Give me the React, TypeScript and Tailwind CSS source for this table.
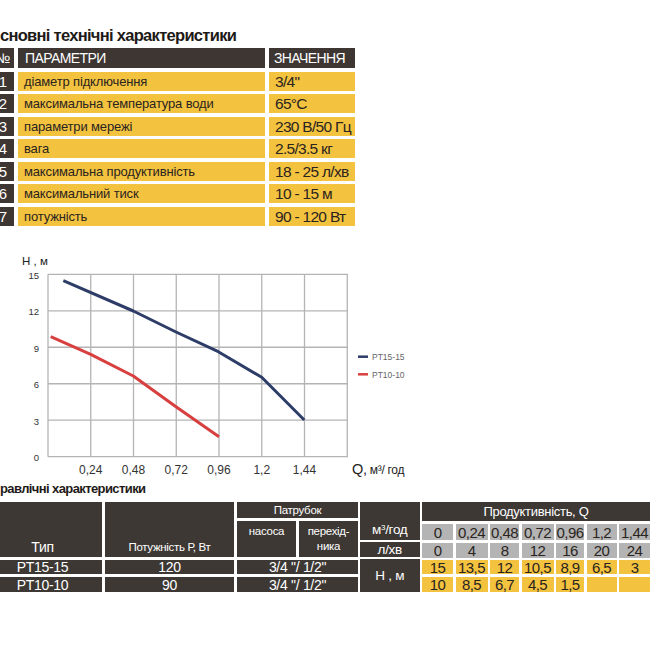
import React from "react";

const font = "font-['Liberation_Sans',Arial,sans-serif]";

const specs = [
  ["1", "діаметр підключення", "3/4\""],
  ["2", "максимальна температура води", "65°C"],
  ["3", "параметри мережі", "230 В/50 Гц"],
  ["4", "вага", "2.5/3.5 кг"],
  ["5", "максимальна продуктивність", "18 - 25 л/хв"],
  ["6", "максимальний тиск", "10 - 15 м"],
  ["7", "потужність", "90 - 120 Вт"],
];

const flowM3 = ["0", "0,24", "0,48", "0,72", "0,96", "1,2", "1,44"];
const flowL = ["0", "4", "8", "12", "16", "20", "24"];
const head15 = ["15", "13,5", "12", "10,5", "8,9", "6,5", "3"];
const head10 = ["10", "8,5", "6,7", "4,5", "1,5", "", ""];

// chart helpers: q in m3/h, h in m
const gx = (q: number) => 48 + (q / 0.24) * 42.75;
const gy = (h: number) => 216.7 - h * 12.16;

const blue = [
  [63.3, 40.7],
  [133.3, 71],
  [176, 92],
  [218.3, 111.7],
  [261.7, 137.3],
  [304.3, 180],
];
const red = [
  [50.7, 96.7],
  [90.7, 114.3],
  [133.3, 136],
  [176, 166.7],
  [219, 196.7],
];

const pts = (p: number[][]) => p.map((x) => x.join(",")).join(" ");
const svgFont = "Liberation Sans, Arial, sans-serif";

const SpecTable: React.FC = () => (
  <div className="ml-[-8px] grid grid-cols-[22px_247px_86px] gap-x-[4px] gap-y-[3.5px] whitespace-nowrap">
    <div className="h-[20px] bg-[#3d3633] text-white text-[14px] leading-[20px] text-center">№</div>
    <div className="h-[20px] bg-[#3d3633] text-white text-[14px] tracking-[-0.6px] leading-[20px] pl-[7px]">ПАРАМЕТРИ</div>
    <div className="h-[20px] bg-[#3d3633] text-white text-[14px] tracking-[-0.6px] leading-[20px] pl-[5px]">ЗНАЧЕННЯ</div>
    {specs.map(([n, p, v]) => (
      <React.Fragment key={n}>
        <div className="h-[19px] bg-[#3d3633] text-white text-[15px] leading-[19px] text-center">{n}</div>
        <div className="h-[19px] bg-[#f3c23f] text-[#2a2420] text-[13px] tracking-[-0.15px] leading-[19px] pl-[6px]">{p}</div>
        <div className="h-[19px] bg-[#f3c23f] text-[#2a2420] text-[15.5px] tracking-[-0.7px] leading-[19px] pl-[6px]">{v}</div>
      </React.Fragment>
    ))}
  </div>
);

const Chart: React.FC = () => (
  <svg width="420" height="240" className="block">
    {[0, 3, 6, 9, 12, 15].map((h) => (
      <g key={h}>
        <line x1={48} x2={348} y1={gy(h)} y2={gy(h)} stroke="#b4b4b4" strokeWidth="1.3" />
        <text x={39} y={gy(h) + 4.5} textAnchor="end" fontSize="9.5" fill="#333" fontFamily={svgFont}>
          {h}
        </text>
      </g>
    ))}
    {[0, 0.24, 0.48, 0.72, 0.96, 1.2, 1.44, 1.68].map((q) => (
      <line key={q} x1={gx(q)} x2={gx(q)} y1={gy(15)} y2={gy(0)} stroke="#b4b4b4" strokeWidth="1.3" />
    ))}
    {["0,24", "0,48", "0,72", "0,96", "1,2", "1,44"].map((t, i) => (
      <text key={t} x={gx(0.24 * (i + 1))} y={233.5} textAnchor="middle" fontSize="12" fill="#333" fontFamily={svgFont}>
        {t}
      </text>
    ))}
    <text x={22} y={25} fontSize="11.5" fill="#222" fontFamily={svgFont}>
      H , м
    </text>
    <text x={352} y={234} fill="#222" fontFamily={svgFont} letterSpacing="-0.3">
      <tspan fontSize="14.5">Q,</tspan>
      <tspan fontSize="12"> м³/ год</tspan>
    </text>
    <polyline points={pts(blue)} fill="none" stroke="#2e3d68" strokeWidth="3" strokeLinejoin="round" />
    <polyline points={pts(red)} fill="none" stroke="#d8403f" strokeWidth="3" strokeLinejoin="round" />
    <line x1={358} x2={368} y1={116.7} y2={116.7} stroke="#2e3d68" strokeWidth="2.5" />
    <line x1={358} x2={368} y1={134.3} y2={134.3} stroke="#d8403f" strokeWidth="2.5" />
    <text x={372} y={120} fontSize="8.5" fill="#666" fontFamily={svgFont}>PT15-15</text>
    <text x={372} y={137.6} fontSize="8.5" fill="#666" fontFamily={svgFont}>PT10-10</text>
  </svg>
);

const dark = "bg-[#3d3834] text-white";

const HydroTable: React.FC = () => (
  <div className="flex items-start tracking-[-0.3px]">
    <div className="ml-[-17px] grid grid-cols-[119px_129px_59px_59px] grid-rows-[16px_36px_14px_15px] gap-x-[3px] gap-y-[3px]">
      <div className={`${dark} row-span-2 flex items-end justify-center pb-[2px] text-[14px] leading-[16px]`}>Тип</div>
      <div className={`${dark} row-span-2 flex items-end justify-center pb-[2px] text-[11.5px] leading-[16px]`}>Потужність Р, Вт</div>
      <div className={`${dark} col-span-2 flex items-center justify-center text-[11.5px] leading-[16px]`}>Патрубок</div>
      <div className={`${dark} flex items-start justify-center pt-[3px] text-[11.5px] leading-[15px]`}>насоса</div>
      <div className={`${dark} flex items-start justify-center pt-[3px] text-center text-[11.5px] leading-[15px]`}>
        перехід-
        <br />
        ника
      </div>
      <div className={`${dark} flex items-center justify-center text-[14px] leading-none`}>PT15-15</div>
      <div className={`${dark} flex items-center justify-center text-[14px] leading-none`}>120</div>
      <div className={`${dark} col-span-2 flex items-center justify-center text-[14px] leading-none`}>3/4 "/ 1/2"</div>
      <div className={`${dark} flex items-center justify-center text-[14px] leading-none`}>PT10-10</div>
      <div className={`${dark} flex items-center justify-center text-[14px] leading-none`}>90</div>
      <div className={`${dark} col-span-2 flex items-center justify-center text-[14px] leading-none`}>3/4 "/ 1/2"</div>
    </div>
    <div className="ml-[2px] flex w-[86px] flex-col gap-[2px]">
      <div className={`${dark} flex h-[38px] items-end justify-center pb-[1px] text-[13.5px] leading-[18px]`}>
        <span>
          м<sup className="text-[8px]">3</sup>/год
        </span>
      </div>
      <div className={`${dark} flex h-[15px] items-center justify-center text-[13.5px] leading-none`}>л/хв</div>
      <div className={`${dark} flex h-[33px] items-center justify-center text-[13.5px] leading-none`}>Н , м</div>
    </div>
    <div className="ml-[2.5px] flex flex-col">
      <div className={`${dark} flex h-[19px] items-center justify-center text-[13px] leading-none`}>Продуктивність, Q</div>
      <div className="mt-[3px] grid grid-cols-[31px_32px_29px_32px_28px_30px_31px] grid-rows-[16px_15px_14px_15px] gap-x-[2.5px] gap-y-[2.5px] text-[15px] tracking-[-0.6px] leading-none text-[#2a2420]">
        {flowM3.map((v, i) => (
          <div key={"a" + i} className="flex items-center justify-center bg-[#b4b4b4]">{v}</div>
        ))}
        {flowL.map((v, i) => (
          <div key={"b" + i} className="flex items-center justify-center bg-[#b4b4b4]">{v}</div>
        ))}
        {head15.map((v, i) => (
          <div key={"c" + i} className="flex items-center justify-center bg-[#f3c23f]">{v}</div>
        ))}
        {head10.map((v, i) => (
          <div key={"d" + i} className="flex items-center justify-center bg-[#f3c23f]">{v}</div>
        ))}
      </div>
    </div>
  </div>
);

const App: React.FC = () => {
  return (
    <div className={`relative h-[650px] w-[650px] overflow-hidden bg-white ${font}`}>
      <div className="h-[240px] pt-[25px]">
        <h2 className="h-[20px] text-[16.5px] font-bold tracking-[-0.7px] leading-[20px] text-[#1e1a17]">сновні технічні характеристики</h2>
        <div className="mt-[3px]">
          <SpecTable />
        </div>
      </div>
      <Chart />
      <div className="whitespace-nowrap">
        <h3 className="h-[18px] text-[13px] font-bold tracking-[-0.6px] leading-[18px] text-[#1e1a17]">равлічні характеристики</h3>
        <div className="mt-[4px]">
          <HydroTable />
        </div>
      </div>
    </div>
  );
};

export default App;
